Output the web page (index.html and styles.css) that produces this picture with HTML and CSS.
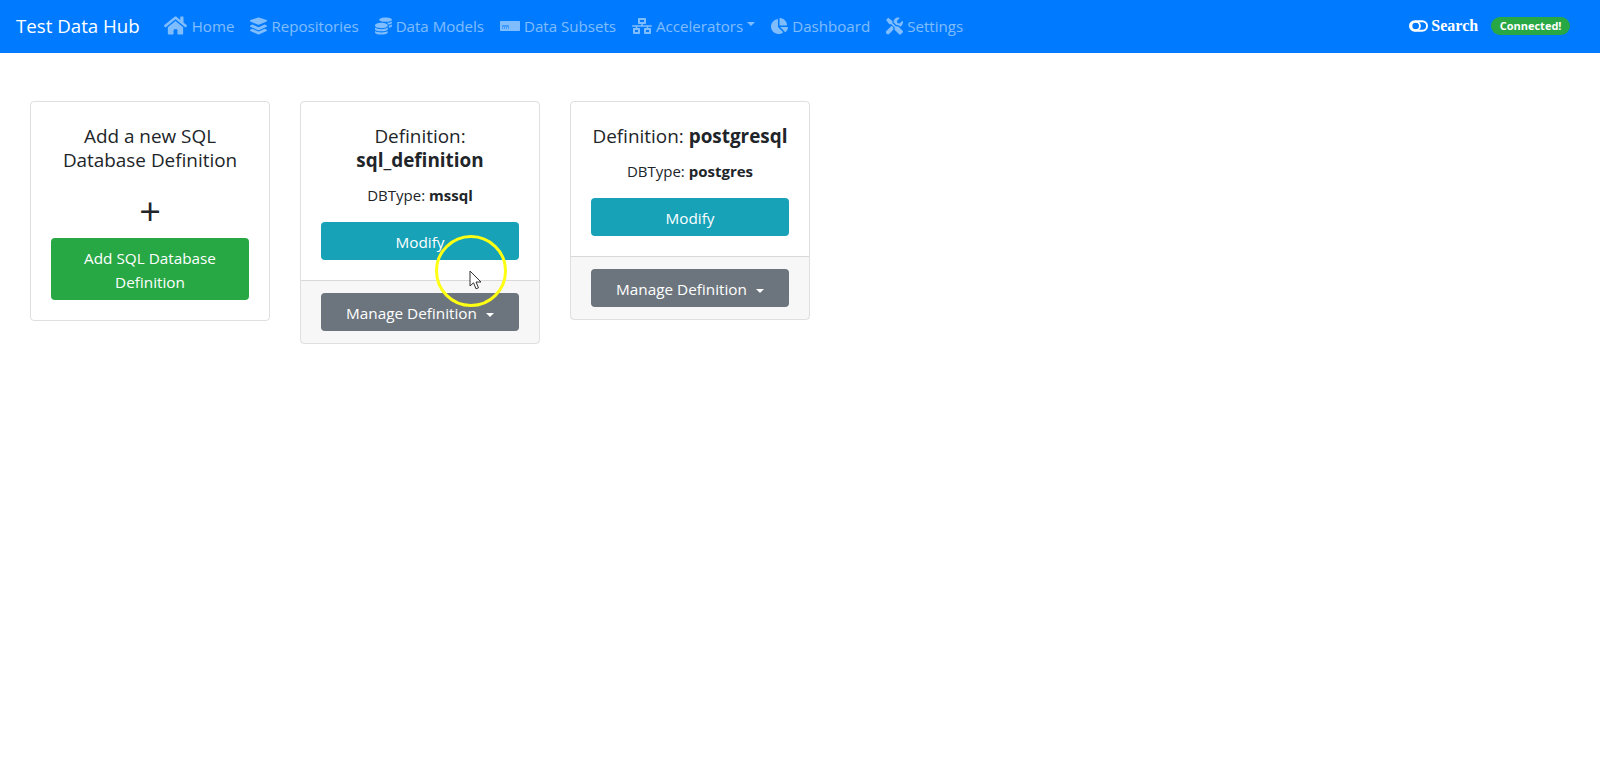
FILE: index.html
```html
<!DOCTYPE html>
<html>
<head>
	<title>Test Data Hub</title>
	<meta charset="utf-8">
	<link rel="stylesheet" href="styles.css">
</head>
<body>
<nav class="navbar">
	<a class="brand">Test Data Hub</a>
	<ul class="nav-list">
		<li class="nav-item">
			<svg class="icon icon-home" viewBox="0 0 576 512"><path d="M280 148 96 300v164c0 9 7 16 16 16l112-.3c9 0 16-7 16-16V368c0-9 7-16 16-16h64c9 0 16 7 16 16v95.600c0 9 7 16 16 16l112 .4c9 0 16-7 16-16V300L296 148c-5-4-11-4-16 0zM572 251l-84-69V44c0-7-5-12-12-12h-56c-7 0-12 5-12 12v72l-89-74c-18-14-43-14-61 0L4 251c-5 4-6 12-2 17l26 31c4 5 12 6 17 2L280 107c5-4 11-4 16 0l235 194c5 4 13 3 17-2l26-31c4-5 3-13-2-17z"/></svg>
			Home
		</li>
		<li class="nav-item">
			<svg class="icon" viewBox="0 0 512 512"><path d="M13 117l232 105c7 3 15 3 22 0l232-105c16-8 16-32 0-40L267 2c-7-3-15-3-22 0L13 77c-17 8-17 32 0 40zM499 240l-58-26-161 73c-8 3-16 5-24 5s-16-2-24-5L71 214l-58 26c-17 8-17 32 0 40l232 105c7 3 15 3 22 0l232-105c16-8 16-32 0-40zM499 368l-58-26-161 73c-8 3-16 5-24 5s-16-2-24-5L71 342l-58 26c-17 8-17 32 0 40l232 102c7 3 15 3 22 0l232-102c16-8 16-32 0-40z"/></svg>
			Repositories
		</li>
		<li class="nav-item">
			<svg class="icon" viewBox="0 0 512 512"><path d="M0 405v43c0 35 86 64 192 64s192-29 192-64v-43c-41 29-117 43-192 43S41 434 0 405zM320 128c106 0 192-29 192-64S426 0 320 0 128 29 128 64s86 64 192 64zM0 300v51c0 35 86 64 192 64s192-29 192-64v-51c-41 34-117 51-192 51S41 334 0 300zM416 311c57-11 96-32 96-55v-43c-23 16-57 27-96 34v64zM192 160C86 160 0 196 0 240s86 80 192 80 192-36 192-80-86-80-192-80zM411 216c60-11 101-32 101-56v-43c-36 25-97 39-161 42 29 14 51 33 60 57z"/></svg>
			Data Models
		</li>
		<li class="nav-item">
			<svg class="icon icon-wide" viewBox="0 0 640 512"><path d="M32 96h576c18 0 32 14 32 32v256c0 18-14 32-32 32H32c-18 0-32-14-32-32V128c0-18 14-32 32-32zM64 240v32h224v-32H64zm0 64v32h32v-32H64zm64 0v32h32v-32h-32zm64 0v32h32v-32h-32zm64 0v32h32v-32h-32z" fill-rule="evenodd"/></svg>
			Data Subsets
		</li>
		<li class="nav-item">
			<svg class="icon icon-wide" viewBox="0 0 640 512"><path d="M640 264v-16c0-9-7-16-16-16H344v-40h72c18 0 32-14 32-32V32c0-18-14-32-32-32H224c-18 0-32 14-32 32v128c0 18 14 32 32 32h72v40H16c-9 0-16 7-16 16v16c0 9 7 16 16 16h104v40H64c-18 0-32 14-32 32v128c0 18 14 32 32 32h160c18 0 32-14 32-32V352c0-18-14-32-32-32h-56v-40h304v40h-56c-18 0-32 14-32 32v128c0 18 14 32 32 32h160c18 0 32-14 32-32V352c0-18-14-32-32-32h-56v-40h104c9 0 16-7 16-16zM256 128V64h128v64H256zm-64 320H96v-64h96v64zm352 0h-96v-64h96v64z"/></svg>
			Accelerators<span class="caret"></span>
		</li>
		<li class="nav-item">
			<svg class="icon" viewBox="0 0 544 512"><path d="M528 288H290l158 158c6 6 16 7 23 1 39-36 65-85 73-141 1-10-6-18-16-18zM512 223C504 103 409 8 289 0c-9-1-17 7-17 16v224h224c9 0 17-8 16-17zM224 288V51c0-9-8-16-18-15C87 53-4 157 0 282c4 128 114 233 242 230 51-1 97-17 136-44 8-6 9-17 2-24L224 288z"/></svg>
			Dashboard
		</li>
		<li class="nav-item">
			<svg class="icon" viewBox="0 0 512 512"><path d="M502 402 385 285c-23-23-57-28-85-14L194 165V104L67 8 3 72l96 128h61l106 106c-13 28-9 62 14 85l117 117c15 15 38 15 52 0l53-53c14-15 14-38 0-53zM331 224c28 0 55 11 76 32l19 19c16-7 30-16 43-29 36-36 49-88 37-135-2-9-14-12-21-5l-74 74-68-11-11-68 74-74c7-7 4-19-5-21-47-12-99 1-135 37-28 28-41 64-40 100l82 82c7-1 15-1 23-1zM227 306l-57-57L17 402c-23 23-23 61 0 84 24 24 62 24 85 0l124-124c-8-18-7-37 1-56z"/></svg>
			Settings
		</li>
	</ul>
	<div class="nav-right">
		<span class="search">
			<svg class="search-icon" viewBox="0 0 20 12"><rect x="1" y="1" width="18" height="10" rx="5" /><circle cx="7" cy="6" r="4.500" /></svg>
			Search
		</span>
		<span class="badge">Connected!</span>
	</div>
</nav>

<main class="card-row">
	<div class="card">
		<div class="card-body">
			<h5 class="card-title">Add a new SQL Database Definition</h5>
			<div class="plus">+</div>
			<a class="btn btn-success">Add SQL Database Definition</a>
		</div>
	</div>

	<div class="card">
		<div class="card-body">
			<h5 class="card-title">Definition: <b>sql_definition</b></h5>
			<p class="card-text">DBType: <b>mssql</b></p>
			<a class="btn btn-info">Modify</a>
		</div>
		<div class="card-footer">
			<a class="btn btn-secondary">Manage Definition<span class="caret"></span></a>
		</div>
		<div class="cursor-ring">
			<svg class="cursor" viewBox="0 0 14 21"><path d="M1 1v15l3.500-3.200 2.500 6 2.500-1-2.500-5.800h5z"/></svg>
		</div>
	</div>

	<div class="card">
		<div class="card-body">
			<h5 class="card-title">Definition: <b>postgresql</b></h5>
			<p class="card-text">DBType: <b>postgres</b></p>
			<a class="btn btn-info">Modify</a>
		</div>
		<div class="card-footer">
			<a class="btn btn-secondary">Manage Definition<span class="caret"></span></a>
		</div>
	</div>
</main>
</body>
</html>
```

FILE: styles.css
```css
* {
	box-sizing: border-box;
}
body {
	margin: 0;
	background-color: #fff;
	color: #212529;
	font-family: "Open Sans", "Noto Sans", sans-serif;
	font-size: 15px;
	line-height: 24px;
}

/* navbar */
.navbar {
	display: flex;
	align-items: center;
	height: 53px;
	padding: 0 16px 2px;
	background-color: #007bff;
}
.brand {
	margin-right: 24px;
	color: #fff;
	font-size: 18.700px;
}
.nav-list {
	display: flex;
	align-items: center;
	gap: 16px;
	margin: 0;
	padding: 0;
	list-style: none;
}
.nav-item {
	display: flex;
	align-items: center;
	gap: 4px;
	color: rgba(255, 255, 255, 0.5);
	font-size: 15.100px;
}
.icon {
	width: 17px;
	height: 18px;
	fill: currentColor;
}
.icon-home {
	width: 23px;
	height: 21px;
	margin-right: 1px;
}
.icon-wide {
	width: 20px;
}
.caret {
	display: inline-block;
	margin-left: 4px;
	border-top: 4px solid;
	border-right: 4px solid transparent;
	border-left: 4px solid transparent;
	vertical-align: 2px;
}
.nav-item .caret {
	margin-left: 0;
	margin-bottom: 3px;
}
.nav-right {
	display: flex;
	align-items: center;
	gap: 13px;
	margin-left: auto;
	padding-right: 14px;
}
.search {
	display: flex;
	align-items: center;
	gap: 3px;
	color: #fff;
	font-family: "Liberation Serif", serif;
	font-size: 16px;
	font-weight: 700;
}
.search-icon {
	width: 19px;
	height: 12px;
	fill: none;
	stroke: #fff;
	stroke-width: 2;
}
.badge {
	padding: 0 8.500px;
	border-radius: 10px;
	background-color: #28a745;
	color: #fff;
	font-size: 11px;
	font-weight: 700;
	line-height: 18px;
}

/* cards */
.card-row {
	display: flex;
	align-items: flex-start;
	gap: 30px;
	padding: 48px 30px 0;
}
.card {
	position: relative;
	width: 240px;
	border: 1px solid rgba(0, 0, 0, 0.125);
	border-radius: 4px;
	text-align: center;
}
.card-body {
	padding: 20px;
}
.card-title {
	margin: 0 0 10px;
	padding-top: 2px;
	font-size: 18.900px;
	font-weight: 400;
	line-height: 24px;
}
.card-title b,
.card-text b {
	font-weight: 700;
}
.card-text {
	margin: 0 0 15px;
	padding-top: 1px;
	font-size: 15px;
}
.plus {
	margin: 0;
	padding-top: 1px;
	font-size: 38px;
	line-height: 55px;
}
.btn {
	display: block;
	padding: 8px 12px 6px;
	border-radius: 4px;
	color: #fff;
	font-size: 15.300px;
	line-height: 24px;
}
.btn-success {
	background-color: #28a745;
}
.btn-info {
	background-color: #17a2b8;
}
.btn-secondary {
	background-color: #6c757d;
}
.card-footer {
	padding: 12px 20px;
	border-top: 1px solid rgba(0, 0, 0, 0.125);
	background-color: rgba(0, 0, 0, 0.03);
}
.btn-secondary .caret {
	margin-left: 9px;
}

/* cursor highlight from the screen recording */
.cursor-ring {
	position: absolute;
	left: 134px;
	top: 133px;
	width: 72px;
	height: 72px;
	border: 3.500px solid #ffff14;
	border-radius: 50%;
}
.cursor {
	position: absolute;
	left: 31px;
	top: 32px;
	width: 14px;
	height: 21px;
	fill: #fff;
	stroke: #333;
	stroke-width: 1;
}
```
